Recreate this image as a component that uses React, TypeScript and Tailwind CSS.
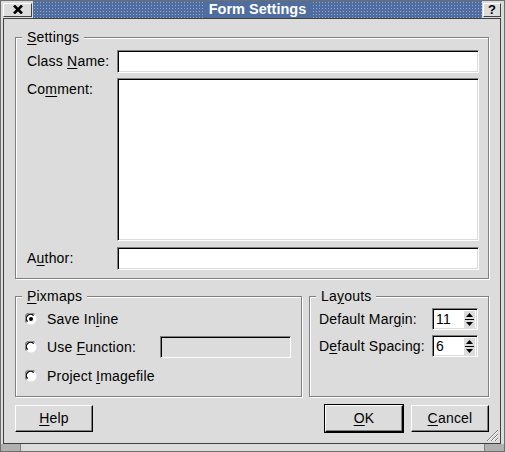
import type { ReactNode } from 'react'

const FONT = "font-['Liberation_Sans',Arial,sans-serif]"

function U({ children }: { children: ReactNode }) {
	return <span className="underline decoration-1 underline-offset-[2px]">{children}</span>
}

function GroupBox({ title, className, children }: { title: ReactNode; className?: string; children: ReactNode }) {
	return (
		<div className={`relative border border-[#808080] shadow-[inset_1px_1px_0_#fff,1px_1px_0_#fff] ${className ?? ''}`}>
			<span className="absolute -top-[9px] left-[6px] bg-[#dcdcdc] px-[5px] leading-[16px]">{title}</span>
			{children}
		</div>
	)
}

function Sunken({ className, children }: { className?: string; children?: ReactNode }) {
	return (
		<div
			className={`border border-t-[#808080] border-l-[#808080] border-b-white border-r-white shadow-[inset_1px_1px_0_#000,inset_-1px_-1px_0_#dcdcdc] ${className ?? ''}`}
		>
			{children}
		</div>
	)
}

function Button({ children, isDefault, className }: { children: ReactNode; isDefault?: boolean; className?: string }) {
	const inner = (
		<div className="flex h-full w-full items-center justify-center border border-t-white border-l-white border-b-black border-r-black bg-[#dcdcdc] shadow-[inset_-1px_-1px_0_#808080]">
			{children}
		</div>
	)
	if (isDefault) {
		return <div className={`border border-black ${className ?? ''}`}>{inner}</div>
	}
	return <div className={className}>{inner}</div>
}

function Radio({ checked }: { checked?: boolean }) {
	return (
		<svg width="12" height="12" viewBox="0 0 12 12" className="shrink-0">
			<circle cx="6" cy="6" r="5.5" fill="#fff" />
			<path d="M1.5 9.5 A5 5 0 0 1 9.5 1.5" stroke="#808080" strokeWidth="1.3" fill="none" />
			<path d="M2.6 8.6 A3.9 3.9 0 0 1 8.6 2.6" stroke="#000" strokeWidth="1.3" fill="none" />
			{checked && <circle cx="6" cy="6" r="2" fill="#000" />}
		</svg>
	)
}

function SpinBox({ value }: { value: string }) {
	return (
		<Sunken className="flex h-[22px] w-[46px] items-center bg-white pl-[3px] pr-[2px]">
			<span className="flex-1 leading-none">{value}</span>
			<svg width="11" height="17" viewBox="0 0 11 17">
				<rect x="0" y="0" width="11" height="17" fill="#dcdcdc" />
				<path d="M5.5 2 L9 6 L2 6 Z" fill="#000" />
				<line x1="1" y1="8.5" x2="10" y2="8.5" stroke="#000" strokeWidth="1" />
				<path d="M2 11 L9 11 L5.5 15 Z" fill="#000" />
			</svg>
		</Sunken>
	)
}

export default function App() {
	return (
		<div className={`${FONT} flex h-[452px] w-[505px] flex-col border border-[#6e6e6e] bg-[#dcdcdc] text-[14px] tracking-[0.2px] text-black`}>
			{/* title bar */}
			<div className="flex h-[17px] items-center gap-[1px] pl-[2px] pr-[3px]">
				<div className="flex h-[14px] w-[29px] items-center justify-center border border-t-white border-l-white border-b-[#404040] border-r-[#404040] bg-[#dcdcdc]">
					<svg width="10" height="9" viewBox="0 0 10 9">
						<path d="M1 0.5 L9 8.5 M9 0.5 L1 8.5" stroke="#000" strokeWidth="2.6" />
					</svg>
				</div>
				<div className="relative flex h-full flex-1 items-center justify-center bg-[#4f6e9f] bg-[radial-gradient(#8ea8d0_0.8px,transparent_0.9px)] bg-[length:3px_3px]">
					<span className="bg-[#4f6e9f] px-[5px] text-[14.5px] font-bold leading-[17px] tracking-normal text-white">Form Settings</span>
				</div>
				<div className="flex h-[14px] w-[18px] items-center justify-center border border-t-white border-l-white border-b-[#404040] border-r-[#404040] bg-[#dcdcdc] text-[13px] font-bold leading-none">
					?
				</div>
			</div>

			{/* dialog body */}
			<div className="relative ml-[2px] mr-[3px] flex flex-1 flex-col border border-[#404040] pl-[11px] pr-[11px] pt-[18px]">
				<GroupBox title={<><U>S</U>ettings</>} className="pb-[8px] pl-[11px] pr-[9px] pt-[12px]">
					<div className="grid grid-cols-[90px_1fr] gap-y-[5px]">
						<div className="leading-[23px]">
							<span>Class </span>
							<U>N</U>
							<span>ame:</span>
						</div>
						<Sunken className="h-[23px] bg-white" />
						<div className="pt-[1px]">
							Co<U>m</U>ment:
						</div>
						<Sunken className="h-[163px] bg-white" />
						<div className="mt-[1px] leading-[23px]">
							A<U>u</U>thor:
						</div>
						<Sunken className="mt-[1px] h-[23px] bg-white" />
					</div>
				</GroupBox>

				<div className="mt-[17px] flex gap-[7px]">
					<GroupBox title={<><U>P</U>ixmaps</>} className="h-[101px] w-[287px] pl-[9px] pr-[10px] pt-[13px]">
						<div className="flex flex-col">
							<div className="flex h-[18px] items-center gap-[10px]">
								<Radio checked />
								<span>
									Save In<U>l</U>ine
								</span>
							</div>
							<div className="mt-[8px] flex h-[22px] items-center gap-[10px]">
								<Radio />
								<span className="w-[103px]">
									Use <U>F</U>unction:
								</span>
								<Sunken className="h-[22px] flex-1 bg-[#dcdcdc]" />
							</div>
							<div className="mt-[9px] flex h-[18px] items-center gap-[10px]">
								<Radio />
								<span>
									Project <U>I</U>magefile
								</span>
							</div>
						</div>
					</GroupBox>
					<GroupBox title={<>La<U>y</U>outs</>} className="h-[101px] flex-1 pl-[9px] pr-[10px] pt-[11px]">
						<div className="flex flex-col gap-[5px]">
							<div className="flex items-center justify-between">
								<span>
									Default Mar<U>g</U>in:
								</span>
								<SpinBox value="11" />
							</div>
							<div className="flex items-center justify-between">
								<span>
									D<U>e</U>fault Spacing:
								</span>
								<SpinBox value="6" />
							</div>
						</div>
					</GroupBox>
				</div>

				<div className="mt-[7px] flex items-center">
					<Button className="h-[27px] w-[78px]">
						<span>
							<U>H</U>elp
						</span>
					</Button>
					<div className="flex-1" />
					<Button isDefault className="h-[29px] w-[80px]">
						<span>
							<U>O</U>K
						</span>
					</Button>
					<Button className="ml-[7px] h-[27px] w-[78px]">
						<span>
							<U>C</U>ancel
						</span>
					</Button>
				</div>

				{/* size grip */}
				<svg className="absolute bottom-[1px] right-[1px]" width="13" height="13" viewBox="0 0 13 13">
					<path d="M12 1 L1 12 M12 5 L5 12 M12 9 L9 12" stroke="#808080" strokeWidth="1" />
					<path d="M12 2 L2 12 M12 6 L6 12 M12 10 L10 12" stroke="#fff" strokeWidth="1" />
				</svg>
			</div>

			{/* bottom handle strip */}
			<div className="flex h-[7px]">
				<div className="w-[20px] border-r border-[#808080] bg-[#b0b0b0]" />
				<div className="flex-1 bg-[#dcdcdc]" />
				<div className="w-[20px] border-l border-[#808080] bg-[#b0b0b0]" />
			</div>
		</div>
	)
}
